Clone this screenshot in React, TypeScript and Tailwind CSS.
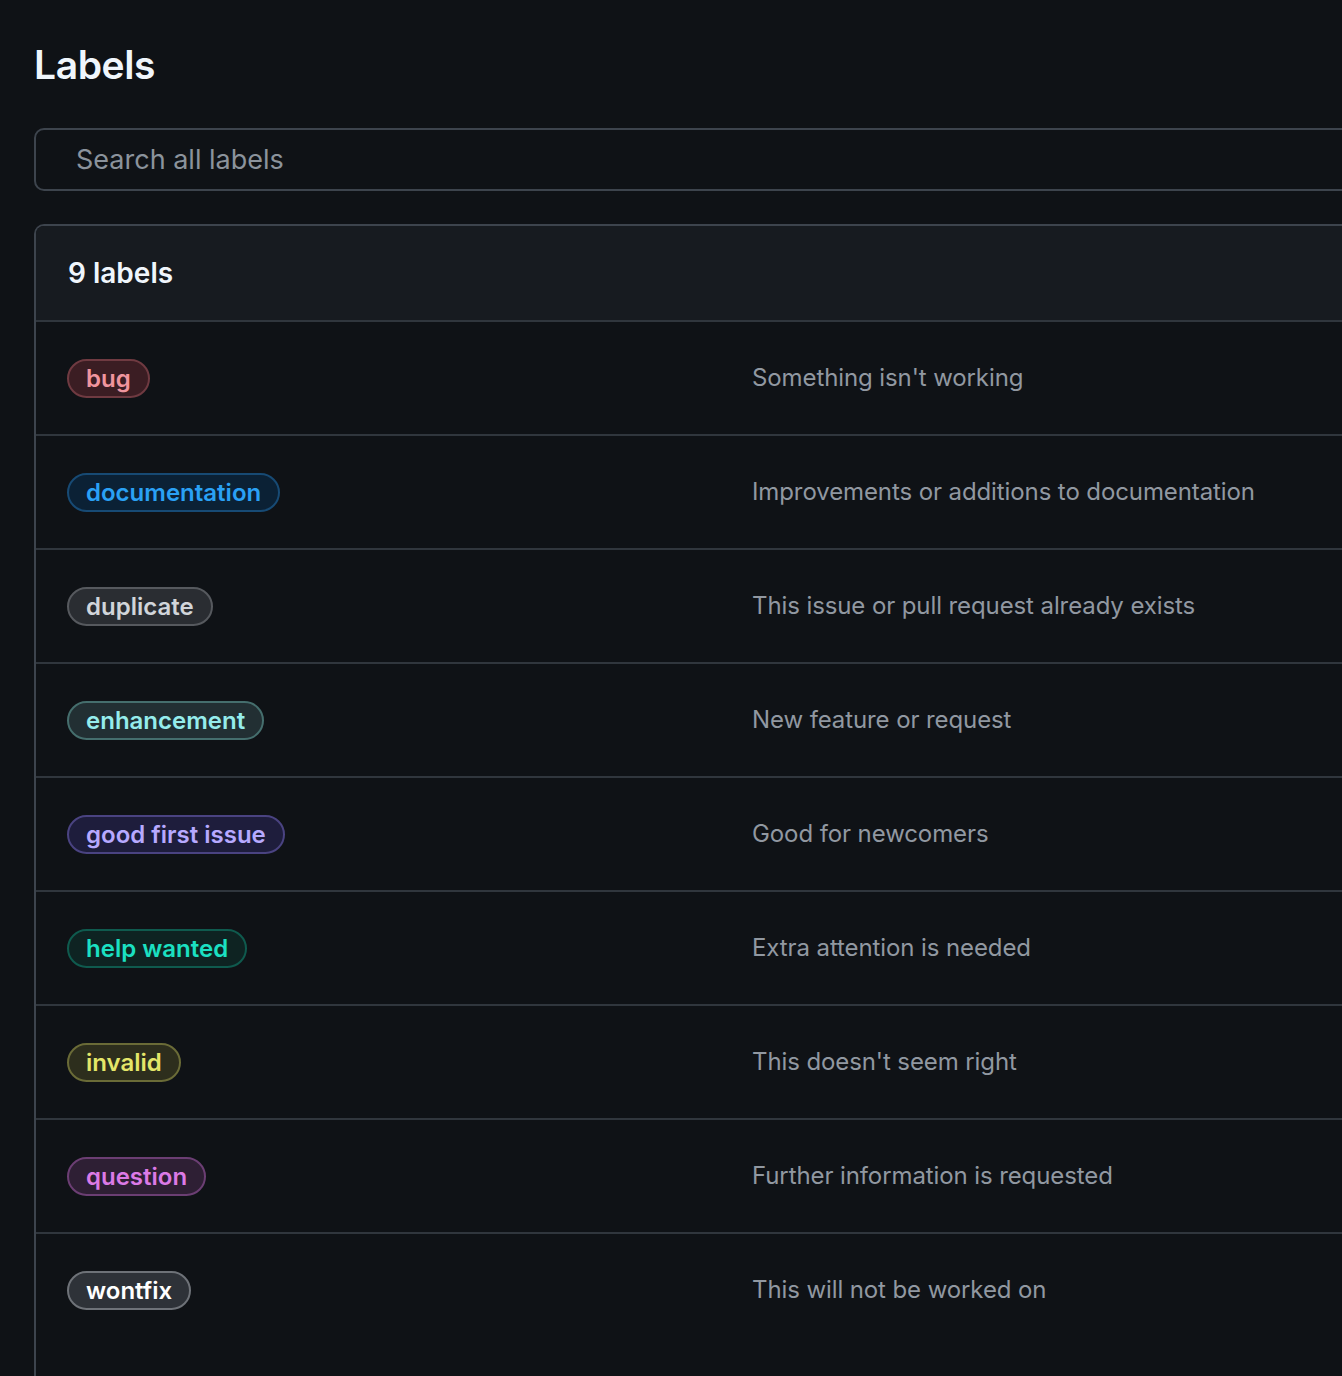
const labels = [
  {
    name: "bug",
    description: "Something isn't working",
    cls: "text-[#f0959e] bg-[#3b1d23] border-[#6f3a41]",
  },
  {
    name: "documentation",
    description: "Improvements or additions to documentation",
    cls: "text-[#2aa1f5] bg-[#0b2135] border-[#174a74]",
  },
  {
    name: "duplicate",
    description: "This issue or pull request already exists",
    cls: "text-[#d1d5da] bg-[#2a2d32] border-[#56595e]",
  },
  {
    name: "enhancement",
    description: "New feature or request",
    cls: "text-[#95ecec] bg-[#222f33] border-[#456e6d]",
  },
  {
    name: "good first issue",
    description: "Good for newcomers",
    cls: "text-[#b7a9ff] bg-[#1e1d3c] border-[#4a4381]",
  },
  {
    name: "help wanted",
    description: "Extra attention is needed",
    cls: "text-[#1be0c2] bg-[#0e2322] border-[#0f5a4e]",
  },
  {
    name: "invalid",
    description: "This doesn't seem right",
    cls: "text-[#e4e669] bg-[#2d2e1d] border-[#6a6b37]",
  },
  {
    name: "question",
    description: "Further information is requested",
    cls: "text-[#dc7ae6] bg-[#2e1f34] border-[#6b3e73]",
  },
  {
    name: "wontfix",
    description: "This will not be worked on",
    cls: "text-white bg-[#2e3238] border-[#6e7278]",
  },
];

export default function App() {
  return (
    <div
      className="w-[1342px] h-[1376px] overflow-hidden bg-[#0f1216] text-[#f0f6fc]"
      style={{ fontFamily: "Inter, 'Noto Sans', sans-serif" }}
    >
      <div className="pl-[34px] pt-[41px]">
        <h1 className="text-[39px] font-semibold leading-[48px] tracking-[-0.4px]">Labels</h1>

        <div className="mt-[39px] w-[1400px] h-[63px] rounded-[10px] border-2 border-[#3d444d] flex items-center pl-[40px] pt-[2px]">
          <span className="text-[27px] text-[#8b939c]">Search all labels</span>
        </div>

        <div className="mt-[33px] w-[1400px] rounded-t-[10px] border-2 border-b-0 border-[#3d444d]">
          <div className="h-[94px] rounded-t-[8px] bg-[#171b20] flex items-center pl-[32px]">
            <span className="text-[28px] font-semibold">9 labels</span>
          </div>
          {labels.map((l) => (
            <div
              key={l.name}
              className="h-[114px] border-t-2 border-[#30363d] flex items-center pl-[31px]"
            >
              <div className="w-[685px]">
                <span
                  className={`inline-block rounded-full border-2 px-[17px] text-[24px] font-semibold leading-[35px] ${l.cls}`}
                >
                  {l.name}
                </span>
              </div>
              <span className="text-[24px] tracking-[-0.1px] text-[#9198a1]">{l.description}</span>
            </div>
          ))}
          <div className="h-[40px]" />
        </div>
      </div>
    </div>
  );
}
